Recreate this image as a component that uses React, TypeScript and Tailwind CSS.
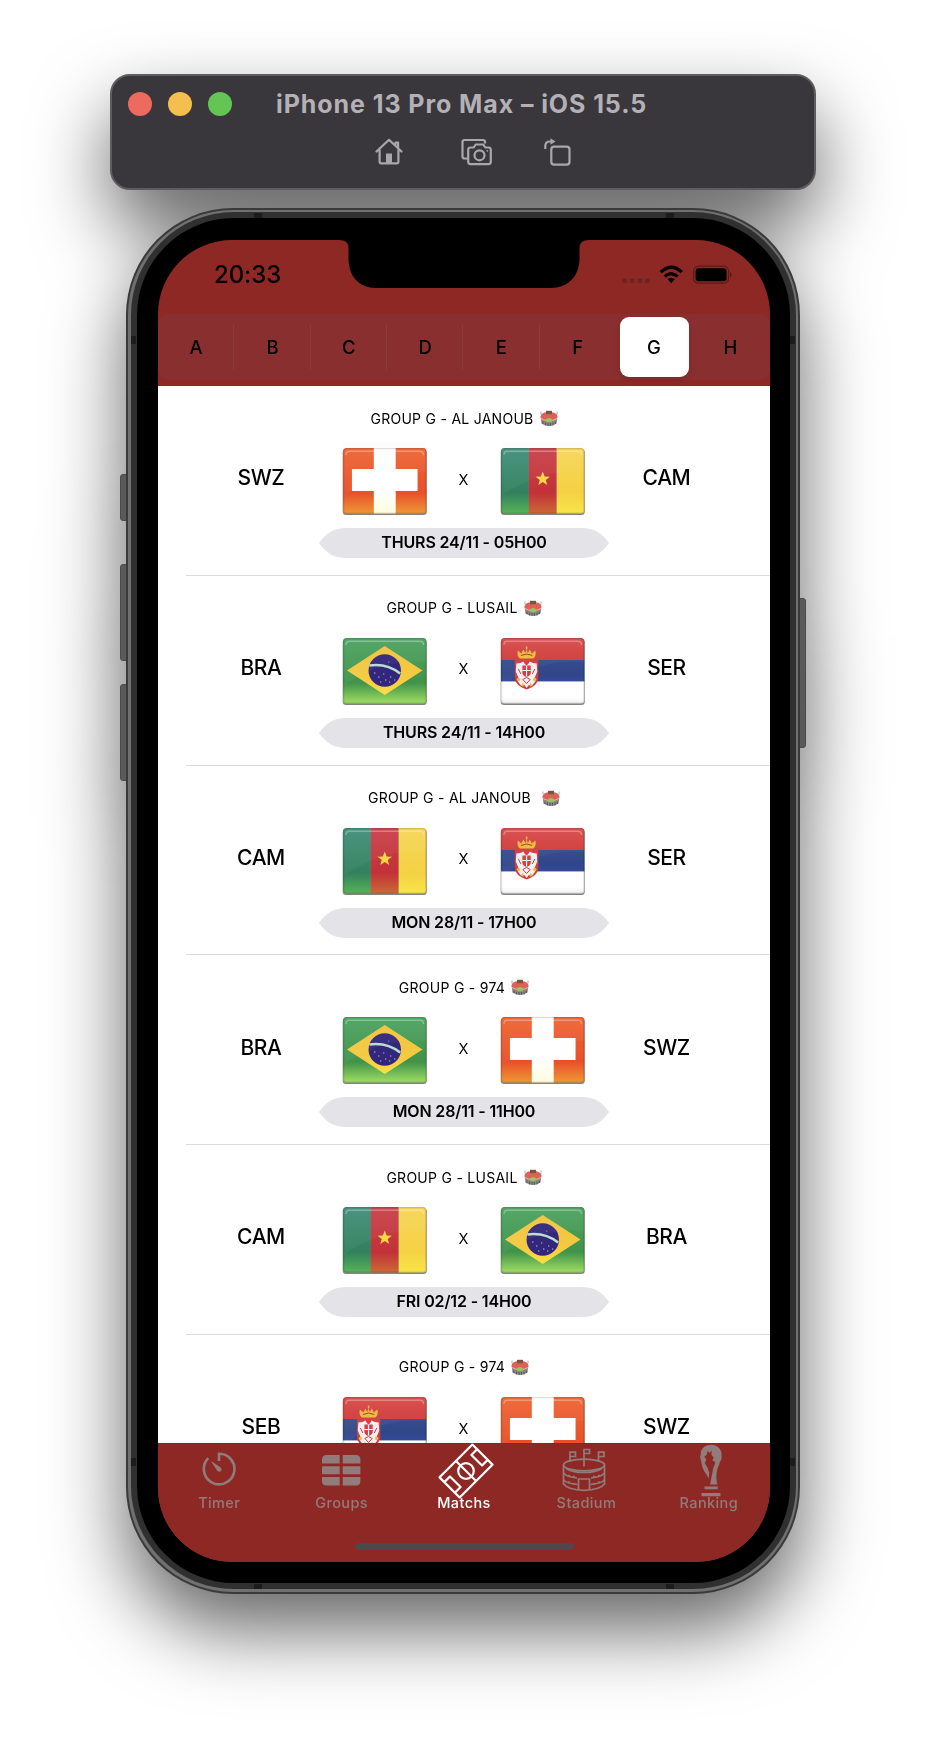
import React from "react";

type Code = "SWZ" | "CAM" | "BRA" | "SER";

interface Match {
  venue: string;
  wide?: boolean;
  home: string;
  away: string;
  homeFlag: Code;
  awayFlag: Code;
  date?: string;
}

const matches: Match[] = [
  { venue: "AL JANOUB", home: "SWZ", away: "CAM", homeFlag: "SWZ", awayFlag: "CAM", date: "THURS 24/11 - 05H00" },
  { venue: "LUSAIL", home: "BRA", away: "SER", homeFlag: "BRA", awayFlag: "SER", date: "THURS 24/11 - 14H00" },
  { venue: "AL JANOUB", wide: true, home: "CAM", away: "SER", homeFlag: "CAM", awayFlag: "SER", date: "MON 28/11 - 17H00" },
  { venue: "974", home: "BRA", away: "SWZ", homeFlag: "BRA", awayFlag: "SWZ", date: "MON 28/11 - 11H00" },
  { venue: "LUSAIL", home: "CAM", away: "BRA", homeFlag: "CAM", awayFlag: "BRA", date: "FRI 02/12 - 14H00" },
  { venue: "974", home: "SEB", away: "SWZ", homeFlag: "SER", awayFlag: "SWZ" },
];

function FlagArt({ code }: { code: Code }) {
  if (code === "SWZ")
    return (
      <>
        <rect width="84" height="66" fill="url(#swz)" />
        <rect x="31" width="22" height="66" fill="url(#swzBar)" />
        <rect x="9" y="21" width="66" height="22" fill="#fff" />
      </>
    );
  if (code === "CAM")
    return (
      <>
        <rect width="28" height="66" fill="url(#camG)" />
        <rect x="28" width="28" height="66" fill="url(#camR)" />
        <rect x="56" width="28" height="66" fill="url(#camY)" />
        <path d="M42 23.500l1.900 5.100 5.300.1-4.200 3.300 1.500 5.100-4.500-3-4.500 3 1.500-5.100-4.200-3.300 5.300-.1z" fill="#f8d648" />
      </>
    );
  if (code === "BRA")
    return (
      <>
        <rect width="84" height="66" fill="url(#bra)" />
        <path d="M4 32.500L42 8l38 24.500L42 57z" fill="url(#braY)" />
        <circle cx="42" cy="32.500" r="16.300" fill="#33277c" />
        <path d="M26.500 27.500Q44 25 57.500 35.500" stroke="#b9dcd2" strokeWidth="2.600" fill="none" />
        <g fill="#a9a5d6">
          <circle cx="32" cy="35" r=".8" />
          <circle cx="36" cy="39" r=".8" />
          <circle cx="41" cy="36" r=".7" />
          <circle cx="43" cy="42" r=".8" />
          <circle cx="48" cy="39" r=".7" />
          <circle cx="47" cy="44" r=".7" />
          <circle cx="38" cy="44" r=".7" />
          <circle cx="52" cy="42" r=".7" />
          <circle cx="46" cy="24" r=".6" />
        </g>
      </>
    );
  return (
    <>
      <rect width="84" height="22" fill="url(#serR)" />
      <rect y="22" width="84" height="21.500" fill="url(#serB)" />
      <rect y="43.500" width="84" height="22.500" fill="url(#serW)" />
      <path d="M14 22h23.500v17c0 7-5 10-11.700 12.500C19 49 14 46 14 39z" fill="#d63a3c" />
      <path
        d="M22.500 23.500l1.500 2.500 1.700 1.500 1.700-1.500 1.500-2.500 3 1.500 4 .5 .6 8-2.500 6 .5 4-3.500 4.500-3-1-2.300 3-2.300-3-3 1-3.500-4.500 .5-4-2.500-6 .6-8 4-.5z"
        fill="#f2eff0"
      />
      <path d="M21.500 27.500h8.400v7q0 3-4.200 4.500-4.200-1.500-4.200-4.500z" fill="#d63a3c" />
      <path d="M25.700 27.500v11M21.500 32.500h8.400" stroke="#fff" strokeWidth="1.200" />
      <path d="M17.500 31l2.500 5M34 31l-2.500 5M22 41.500l3.700-2 3.700 2-3.700 4z" stroke="#d63a3c" strokeWidth="1" fill="none" />
      <g fill="#ecb93a">
        <path d="M17 12.500q-1.500 5 2 8h13.500q3.500-3 2-8l-3.500 3-2-4-2 3.500-1.200-3.500-1.300 3.500-2-3.500-2 4z" />
        <path d="M25 8.500h1.500v3H25z" />
        <circle cx="17.500" cy="41.500" r="1.700" />
        <circle cx="34" cy="41.500" r="1.700" />
        <path d="M20 47.500l2.500-3v4.500zM31.500 47.500l-2.500-3v4.500z" />
      </g>
      <path d="M20 17.500q6-3 11.500 0" stroke="#a5382d" strokeWidth="1" fill="none" />
    </>
  );
}

function Flag({ code }: { code: Code }) {
  return (
    <svg viewBox="-1 -10 86 84" preserveAspectRatio="none" className="-mx-px h-[84px] w-[85.5px] shrink-0">
      <rect y="-7" width="84" height="7" fill="#fdfdfd" />
      <rect x="-.3" y="1" width="84.600" height="66" rx="3.500" fill="#6d6d6d" opacity=".85" />
      <g clipPath="url(#flagClip)">
        <FlagArt code={code} />
        <path d="M0 0h84v24Q40 20 0 48z" fill="#fff" opacity=".04" />
        <rect x=".6" y=".6" width="82.800" height="64.600" rx="3" fill="none" stroke="#000" strokeOpacity=".13" strokeWidth="1.400" />
        <path d="M3 7q0-3.700 3.500-3.700h71q3.500 0 3.500 3.700" fill="none" stroke="#fff" strokeOpacity=".3" strokeWidth="1.400" />
      </g>
    </svg>
  );
}

function Gradients() {
  const stops = (id: string, a: string, b: string, c: string) => (
    <linearGradient id={id} x1="0" y1="0" x2="0" y2="1">
      <stop offset="0" stopColor={a} />
      <stop offset=".68" stopColor={b} />
      <stop offset="1" stopColor={c} />
    </linearGradient>
  );
  return (
    <svg className="absolute h-0 w-0">
      <defs>
        <clipPath id="flagClip">
          <rect width="84" height="65.500" rx="3.500" />
        </clipPath>
        {stops("swz", "#ee6534", "#e9502a", "#ee9a35")}
        {stops("swzBar", "#ffffff", "#fffffc", "#fffcdc")}
        {stops("camG", "#43907c", "#33805f", "#58b455")}
        {stops("camR", "#c9414b", "#c23238", "#cb6a35")}
        {stops("camY", "#f6d657", "#f4d144", "#f8e648")}
        {stops("bra", "#4da463", "#41934a", "#a2e063")}
        {stops("braY", "#f2c23f", "#f4cb42", "#fbe046")}
        {stops("serR", "#d84c4c", "#d2413f", "#cf3d3d")}
        {stops("serB", "#374c8c", "#30468a", "#34499a")}
        {stops("serW", "#ffffff", "#ffffff", "#f1f1f1")}
      </defs>
    </svg>
  );
}

function StadiumEmoji() {
  return (
    <svg viewBox="0 0 18 17" className="h-[17px] w-[18px]">
      <path d="M.6 6.500h16.800l-.8 7Q9 18.500 1.400 13.500z" fill="#8a8c8d" />
      <path d="M3 11.500v2.500M5.500 12.500v2.700M8 13v2.700M10.500 13v2.700M13 12.500v2.700M15.300 11.500v2.500" stroke="#55585a" strokeWidth="1.100" />
      <path d="M.6 6.500C1 3 5 2 9 2s8 1 8.400 4.500C17 10 13.500 12 9 12S1 10 .6 6.500z" fill="#dc6257" />
      <path d="M1 8.500q8 4.500 16 0" stroke="#eeb0a8" strokeWidth="1" fill="none" />
      <path d="M4.500 10.500Q9 5.500 13.500 10.500 9 13.500 4.500 10.500z" fill="#8fcb5f" />
      <path d="M6 .8h6v3.400H6z" fill="#76573d" />
      <path d="M1 1.500v3M17 1.500v3" stroke="#8ab2cf" strokeWidth="1" />
    </svg>
  );
}

function Row({ m }: { m: Match }) {
  return (
    <div className="flex h-[189.8px] shrink-0 flex-col">
      <div className={`mt-[22.500px] flex h-[20px] items-center justify-center ${m.wide ? "gap-[11px]" : "gap-[6px]"}`}>
        <span className="text-[14px] leading-5 tracking-[0.27px]">GROUP G - {m.venue}</span>
        <StadiumEmoji />
      </div>
      <div className="mt-[9.500px] flex h-[84px] items-center pl-[73px]">
        <span className="-mt-[4px] w-[60px] text-center text-[21px] font-medium tracking-[-0.4px]">{m.home}</span>
        <div className="w-[51.5px]" />
        <Flag code={m.homeFlag} />
        <span className="-mt-px w-[75px] text-center text-[14.5px]">X</span>
        <Flag code={m.awayFlag} />
        <div className="w-[52px]" />
        <span className="-mt-[4px] w-[60px] text-center text-[21px] font-medium tracking-[-0.4px]">{m.away}</span>
      </div>
      {m.date && (
        <div className="mx-auto mt-[6px] grid h-[30px] w-[290px] grid-cols-1 grid-rows-1">
          <svg viewBox="0 0 290 30" className="col-start-1 row-start-1 h-[30px] w-[290px]">
            <path d="M0 15C7 5 15 0 27 0H263c12 0 20 5 27 15-7 10-15 15-27 15H27C15 30 7 25 0 15z" fill="#e4e3e8" />
          </svg>
          <span className="col-start-1 row-start-1 text-center text-[16px] leading-[29px] font-semibold tracking-[-0.15px] whitespace-nowrap">
            {m.date}
          </span>
        </div>
      )}
      <div className="mt-auto ml-[28px] h-px bg-[#dcdcdd]" />
    </div>
  );
}

function TitleBar() {
  return (
    <div className="mx-auto h-[116px] w-[706px] rounded-[20px] border-2 border-[#5d5c60] bg-[#39363c]">
      <div className="flex h-[56px] items-center pl-[16px]">
        <div className="flex gap-4">
          <span className="h-6 w-6 rounded-full bg-[#ee6a5f]" />
          <span className="h-6 w-6 rounded-full bg-[#f5bf4f]" />
          <span className="h-6 w-6 rounded-full bg-[#62c554]" />
        </div>
        <span className="mt-px ml-[44px] text-[25px] font-bold tracking-[0.92px] whitespace-nowrap text-[#b4b1b6]">iPhone 13 Pro Max – iOS 15.5</span>
      </div>
      <div className="flex h-[40px] items-center pl-[263px] text-[#a9a7ac]">
        <svg viewBox="0 0 28 28" className="h-7 w-7" fill="none" stroke="currentColor" strokeWidth="2.200" strokeLinejoin="round" strokeLinecap="round">
          <path d="M1.500 13.500L14 1.800l12.500 11.700M4.600 12v12q0 1.300 1.300 1.300h16.200q1.300 0 1.300-1.300V12M20.500 7V4.500h2.600v5" />
          <path d="M11 25v-9.500h6V25z" fill="currentColor" stroke="none" />
        </svg>
        <svg viewBox="0 0 32 28" className="ml-[58px] h-7 w-8" fill="none" stroke="currentColor" strokeWidth="2.200" strokeLinejoin="round">
          <path d="M7 20.500H3.500q-2 0-2-2V4q0-2 2-2H22q2 0 2 2v1.500" />
          <path d="M9.500 9.500h3.200l2-3h7.600l2 3h3.200q2.300 0 2.300 2.300v12q0 2.300-2.300 2.300h-18q-2.300 0-2.300-2.300v-12q0-2.300 2.300-2.300z" />
          <circle cx="18.500" cy="17.300" r="5" />
          <circle cx="26.300" cy="12.800" r=".9" fill="currentColor" stroke="none" />
        </svg>
        <svg viewBox="0 0 28 28" className="ml-[51px] h-7 w-7" fill="none" stroke="currentColor" strokeWidth="2.200">
          <rect x="7.300" y="8.600" width="18.200" height="18" rx="2.800" />
          <path d="M1.300 11V8q0-4.500 4.500-4.500h2" />
          <path d="M6.500.200v6.600l5-3.300z" fill="currentColor" stroke="none" />
        </svg>
      </div>
    </div>
  );
}

function StatusBar() {
  return (
    <div className="flex h-[74.500px] items-start pt-[20px] pl-[56px]">
      <span className="w-[68px] text-[24px] leading-[30px] font-medium tracking-[-0.1px]">20:33</span>
      <svg viewBox="0 0 112 20" className="mt-[5px] ml-[339.5px] h-5 w-28">
        <g fill="#6b2321">
          <rect x=".3" y="13.500" width="4.500" height="4.500" rx="1.300" />
          <rect x="8" y="13.500" width="4.500" height="4.500" rx="1.300" />
          <rect x="15.700" y="13.500" width="4.500" height="4.500" rx="1.300" />
          <rect x="23.300" y="13.500" width="4.500" height="4.500" rx="1.300" />
        </g>
        <g fill="none" stroke="#000" strokeWidth="3.200">
          <path d="M38.700 7.200q10.500-9.800 21 0" />
          <path d="M42.700 11.600q6.500-6 13 0" />
        </g>
        <path d="M45.600 14.200q3.600-3 7.200 0L49.200 18.200z" />
        <rect x="71.600" y="1.200" width="35" height="17" rx="4.800" fill="none" stroke="#5a1b19" strokeWidth="1.200" />
        <rect x="73.600" y="3.200" width="31" height="13" rx="3" />
        <path d="M108.200 6.800q2.500 2.800 0 6z" fill="#471311" />
      </svg>
    </div>
  );
}

function Segments() {
  const letters = ["A", "B", "C", "D", "E", "F", "G", "H"];
  return (
    <div className="flex h-[66px] items-center rounded-[10px] bg-[#8a2f2f] pr-[1.500px]">
      {letters.map((l, i) => (
        <div key={l} className="flex h-full flex-1 items-center">
          <div className="flex flex-1 justify-center">
            <span
              className={
                l === "G"
                  ? "flex h-[60px] w-[69px] items-center justify-center rounded-[9px] bg-white pt-[2px] text-[18.5px] font-medium shadow-[0_2px_6px_rgba(0,0,0,0.15)]"
                  : "flex h-[60px] items-center pt-[2px] text-[18.5px] font-[450]"
              }
            >
              {l}
            </span>
          </div>
          {i < 5 && <div className="-ml-px h-[46px] w-px bg-[#8a3d3d]" />}
        </div>
      ))}
    </div>
  );
}

const TimerIcon = () => (
  <svg viewBox="0 0 36 36" className="-mt-1 h-9 w-9" fill="none" stroke="currentColor" strokeWidth="2.600">
    <path d="M18 10V2.700A15.300 15.300 0 1 1 7.300 7.200" />
    <path d="M11 10.500q-.7.200-.3.900l5.600 8.300q1.800 2 3.600.3 1.600-1.700-.4-3.500z" fill="currentColor" stroke="none" />
  </svg>
);

const GroupsIcon = () => (
  <svg viewBox="0 0 38.400 31" className="-mt-0.5 h-[31px] w-[38.4px]" fill="currentColor">
    <path d="M4.500 0H17.700v8.600H0V4.500Q0 0 4.500 0zM20.700 0h13.200Q38.400 0 38.400 4.500v4.100H20.700zM0 11.200h17.700v8H0zM20.700 11.200H38.400v8H20.700zM0 22h17.700v8.600H4.500Q0 30.600 0 26zM20.700 22H38.400v4q0 4.600-4.500 4.600H20.700z" />
  </svg>
);

const PitchIcon = () => (
  <svg viewBox="0 0 56 56" className="ml-[4px] h-[56px] w-[56px]" fill="none" stroke="currentColor" strokeWidth="2.200" strokeLinejoin="round">
    <g transform="rotate(-45 28 28)">
      <rect x="4.800" y="13.800" width="46.400" height="28.400" />
      <path d="M28 13.800v28.400M4.800 20.500h8v15h-8M51.200 20.500h-8v15h8" />
      <circle cx="28" cy="28" r="7.800" />
    </g>
  </svg>
);

const StadiumIcon = () => (
  <svg viewBox="0 0 44 44" className="-mt-0.5 -ml-[4px] h-11 w-11" fill="none" stroke="currentColor" strokeWidth="1.700">
    <ellipse cx="22" cy="17" rx="20.500" ry="5.800" />
    <path d="M1.500 17v19Q6 42 22 42.300 38 42 42.500 36V17" />
    <path d="M4 20.500Q10 24.500 22 24.500t18-4M1.500 25q3.500 4 13.500 5M42.500 25q-3.500 4-13.500 5M1.500 32q3.500 3.500 14 4.500M42.500 32q-3.500 3.500-14 4.500" />
    <path d="M16.500 42V31h11v11M8 14V4.200h5.500v4.300H8M22 18.500V1.500h5.500v4H22M36.500 14V4.200H42v4.300h-5.500" />
    <path d="M6 27.500h1.800M11 28.500h1.800M36 27.500h1.800M31 28.500h1.800M6 34h1.800M11 36h1.800M36 34h1.800M31 36h1.800" strokeWidth="1.600" />
  </svg>
);

const TrophyIcon = () => (
  <svg viewBox="0 0 24 54" className="-mt-px ml-[5px] h-[54px] w-6" fill="currentColor">
    <path d="M12 .8C6 .8 1.500 5 1.800 10c-.9 2.500-.6 4.500.4 7 .3 5 1.800 9 5.300 13.500.8 1.500 1.500 2.500 2.200 4l.6-5-1.600-5.500-3-5 1.700-3-2-3.500 2.500-2 .5-3.500 2 1.800 2.500-2-.6 4 2.500 2.700-1.500 3 3 1.500-.8 3c-2 4.500-1.800 7-2.600 10L11 40.500h7.300c-1.300-5-1-10.500-.3-14 .5-3.500 2.500-5 2.800-8.500 1.700-2 2.200-4 1.700-6.500C23.500 5.500 18 .8 12 .8z" />
    <path d="M5.500 42.500h13.200v2.800H5.500zM2.500 49h19v3.300h-19z" />
  </svg>
);

function TabBar() {
  const tabs = [
    { label: "Timer", icon: <TimerIcon /> },
    { label: "Groups", icon: <GroupsIcon /> },
    { label: "Matchs", icon: <PitchIcon />, active: true },
    { label: "Stadium", icon: <StadiumIcon /> },
    { label: "Ranking", icon: <TrophyIcon /> },
  ];
  return (
    <div className="flex h-[119px] shrink-0 flex-col border-t border-[#7c2a28] bg-[#8e2825]">
      <div className="flex">
        {tabs.map((t) => (
          <div key={t.label} className={`flex flex-1 flex-col items-center ${t.active ? "text-white" : "text-[#917c7b]"}`}>
            <div className="mt-px flex h-[53px] items-center">{t.icon}</div>
            <span className="-mt-[4px] text-[14.5px] leading-[18px] font-[450] tracking-[0.4px]">{t.label}</span>
          </div>
        ))}
      </div>
      <div className="mx-auto mt-auto mb-[11.500px] h-[7px] w-[219px] rounded-full bg-[#4b4a48]" />
    </div>
  );
}

function Phone() {
  const button = "absolute w-[10px] rounded-[3px] border border-[#4c4c4c] bg-[#5a5a5a]";
  const band = "absolute bg-[#1c1c1c]";
  return (
    <div className="relative mx-auto mt-[17.500px] h-[1386px] w-[674px]">
      <div className={`${button} top-[266px] -left-[6px] h-[47px]`} />
      <div className={`${button} top-[356px] -left-[6px] h-[97px]`} />
      <div className={`${button} top-[476px] -left-[6px] h-[97px]`} />
      <div className={`${button} top-[390px] -right-[6px] h-[150px]`} />
      <div className="relative h-full rounded-[107px] bg-[#3a3a3a] p-[2px]">
        <div className="h-full rounded-[105px] bg-[#707070] p-[2.500px]">
          <div className="h-full rounded-[103px] bg-[#303030] p-[6px]">
            <div className="h-full rounded-[97px] bg-black pt-[21.500px] pr-[19.500px] pb-[21.500px] pl-[21.500px]">
              <div className="relative flex h-full flex-col overflow-hidden rounded-[74px] bg-[#8e2825]">
                <div className="h-[146.500px] shrink-0">
                  <StatusBar />
                  <Segments />
                </div>
                <div className="flex min-h-0 flex-1 flex-col overflow-hidden bg-white">
                  {matches.map((m, i) => (
                    <Row key={i} m={m} />
                  ))}
                </div>
                <TabBar />
                <svg viewBox="0 0 250 48" className="absolute top-0 left-[181px] h-12 w-[250px]">
                  <path d="M0 0h250q-9.500 0-9.500 8v10c0 18-11 30-29 30H37.500c-18 0-28-12-28-30V8Q9.500 0 0 0z" />
                </svg>
              </div>
            </div>
          </div>
        </div>
        <div className={`${band} top-[5px] left-[128px] h-[5px] w-[8px]`} />
        <div className={`${band} top-[5px] right-[126px] h-[5px] w-[8px]`} />
        <div className={`${band} bottom-[5px] left-[128px] h-[5px] w-[8px]`} />
        <div className={`${band} right-[126px] bottom-[5px] h-[5px] w-[8px]`} />
        <div className={`${band} top-[128px] left-[5px] h-[8px] w-[5px]`} />
        <div className={`${band} top-[128px] right-[5px] h-[8px] w-[5px]`} />
        <div className={`${band} bottom-[128px] left-[5px] h-[8px] w-[5px]`} />
        <div className={`${band} right-[5px] bottom-[128px] h-[8px] w-[5px]`} />
      </div>
    </div>
  );
}

export default function App() {
  return (
    <div className="h-[1742px] w-[926px] overflow-hidden bg-white font-[Inter,'Noto_Sans',sans-serif] text-black">
      <Gradients />
      <div className="pt-[74px] [filter:drop-shadow(0_36px_38px_rgba(0,0,0,0.6))]">
        <TitleBar />
        <Phone />
      </div>
    </div>
  );
}
